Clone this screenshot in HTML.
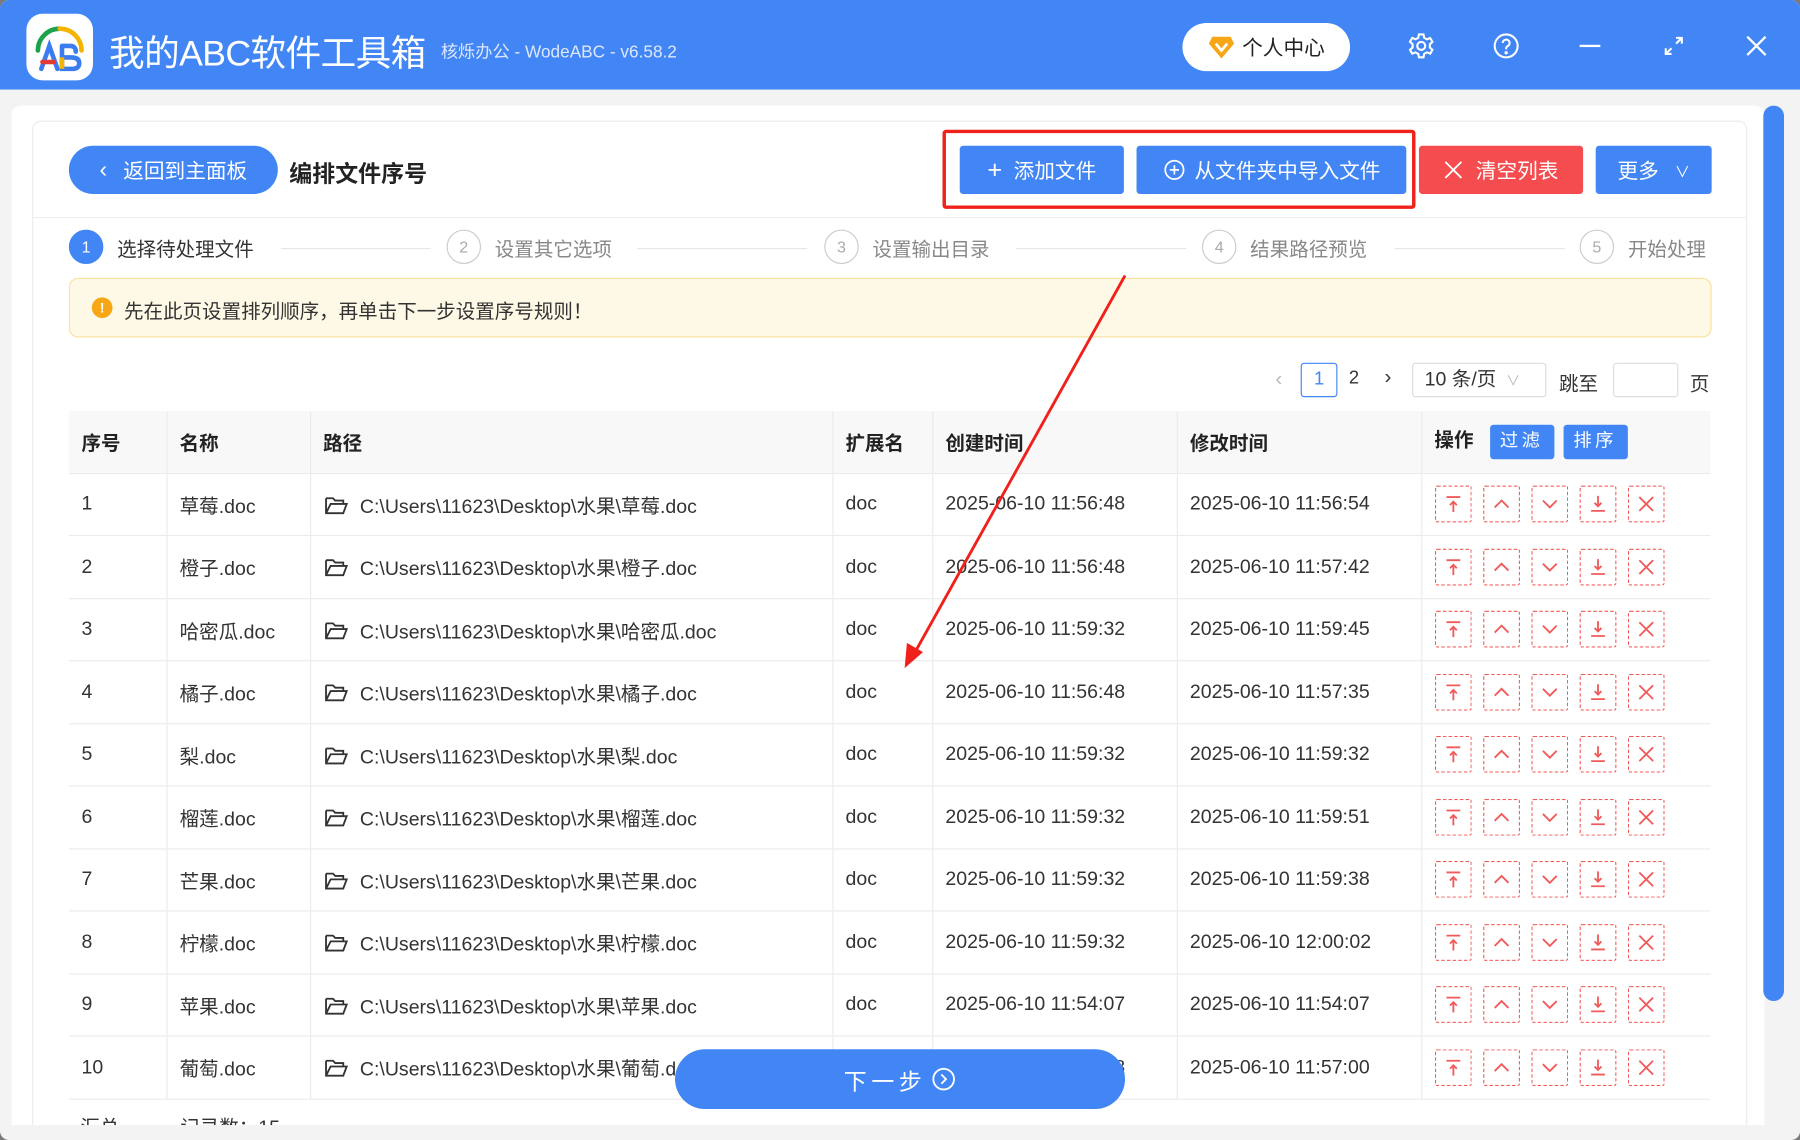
<!DOCTYPE html>
<html><head><meta charset="utf-8">
<style>
*{margin:0;padding:0;box-sizing:border-box}
html,body{width:1800px;height:1140px;overflow:hidden;background:#7a7a7a}
body{font-family:"Liberation Sans","Noto Sans CJK SC",sans-serif;color:#333}
#c{position:absolute;left:0;top:0;width:1568px;height:993px;transform:scale(1.148);transform-origin:0 0;background:#f3f3f3;border-radius:8px;overflow:hidden}
.a{position:absolute}
.top{left:0;top:0;width:1568px;height:78px;background:#4286f5}
.btn{position:absolute;height:42px;color:#fff;font-size:18px;display:flex;align-items:center;justify-content:center;border-radius:3px}
.step{position:absolute;top:200px;display:flex;align-items:center;font-size:17px;color:#888}
.circ{width:30px;height:30px;border-radius:50%;border:1px solid #ccc;display:flex;align-items:center;justify-content:center;font-size:14px;color:#aaa;margin-right:12px}
.line{position:absolute;top:216px;height:1px;background:#e6e6e6}
table{position:absolute;left:60px;top:358px;width:1430px;border-collapse:collapse;font-size:17px}
td,th{border-bottom:1px solid #ebebeb;border-right:1px solid #ebebeb;padding-left:11px;text-align:left;height:54.5px;color:#333;font-weight:normal;white-space:nowrap;vertical-align:middle}
th{background:#f8f8f8;font-weight:bold;height:54px;color:#222}
td:last-child,th:last-child{border-right:none}
.ops{display:flex;gap:10px}
.op{width:32px;height:32px;border:1px dashed #f25a5a;border-radius:2px;display:flex;align-items:center;justify-content:center}
.hb{display:inline-block;vertical-align:middle;background:#4286f5;color:#fff;font-size:16px;padding:0 9px;height:30px;line-height:30px;border-radius:3px;margin-left:8px;letter-spacing:3px;font-weight:normal}
</style></head><body>
<div id="c">
<div class="a top"></div>
<div class="a" style="left:23px;top:12px;width:58px;height:58px;background:#fff;border-radius:14px"></div>
<svg class="a" style="left:23px;top:12px" width="58" height="58" viewBox="0 0 58 58">
<path d="M10 32 A19 19 0 0 1 29 13" stroke="#1ca24a" stroke-width="4" fill="none" stroke-linecap="round"/>
<path d="M29 13 A19 19 0 0 1 48 32" stroke="#f5b400" stroke-width="4" fill="none" stroke-linecap="round"/>
<path d="M13 48 L20 28 L27 48" stroke="#3b7cf0" stroke-width="4" fill="none" stroke-linecap="round"/>
<path d="M14 42 L24 42" stroke="#e53935" stroke-width="4" stroke-linecap="round"/>
<path d="M31 28 L31 48 L40 48 Q46 48 46 43 Q46 38 39 38 L31 38 M31 28 L38 28 Q43 28 43 33" stroke="#3b7cf0" stroke-width="4" fill="none" stroke-linecap="round"/>
<path d="M31 38 L31 48" stroke="#f5b400" stroke-width="4"/>
</svg>
<div class="a" style="left:95px;top:21px;color:#fff;font-size:31px;letter-spacing:-0.5px">我的ABC软件工具箱</div>
<div class="a" style="left:384px;top:34px;color:#dce8fd;font-size:15px">核烁办公 - WodeABC - v6.58.2</div>
<div class="a" style="left:1030px;top:20px;width:146px;height:42px;background:#fff;border-radius:21px;font-size:18px;color:#222;display:flex;align-items:center;padding-left:22px">
<svg width="24" height="22" viewBox="0 0 24 22" style="margin-right:6px"><path d="M4 2 L20 2 L23 8 L12 21 L1 8 Z" fill="#f7a715"/><path d="M7 8 L12 14 L17 8" stroke="#fff" stroke-width="2.4" fill="none"/></svg>个人中心</div>
<svg class="a" style="left:1226px;top:28px" width="24" height="24" viewBox="0 0 24 24" fill="none" stroke="#fff" stroke-width="1.8"><circle cx="12" cy="12" r="3.5"/><path d="M10 2h4l.6 3 2.4 1.3 2.8-1.2 2 3.4-2.3 2v2.9l2.3 2-2 3.4-2.8-1.2-2.4 1.3-.6 3h-4l-.6-3-2.4-1.3-2.8 1.2-2-3.4 2.3-2V10.4l-2.3-2 2-3.4 2.8 1.2L9.4 5z"/></svg>
<svg class="a" style="left:1300px;top:28px" width="24" height="24" viewBox="0 0 24 24" fill="none" stroke="#fff" stroke-width="1.8"><circle cx="12" cy="12" r="10"/><path d="M9 9.5a3 3 0 1 1 4 2.8c-.8.4-1 1-1 2V15"/><circle cx="12" cy="18" r=".6" fill="#fff"/></svg>
<div class="a" style="left:1376px;top:39px;width:18px;height:2px;background:#fff"></div>
<svg class="a" style="left:1449px;top:31px" width="18" height="18" viewBox="0 0 18 18" stroke="#fff" stroke-width="1.8" fill="none"><path d="M11 2h5v5M16 2l-5 5M7 16H2v-5M2 16l5-5"/></svg>
<svg class="a" style="left:1521px;top:31px" width="18" height="18" viewBox="0 0 18 18" stroke="#fff" stroke-width="2"><path d="M1 1L17 17M17 1L1 17"/></svg>

<div class="a" style="left:10px;top:92px;width:1527px;height:901px;background:#fff;border-radius:8px"></div>
<div class="a" style="left:28px;top:105px;width:1494px;height:900px;border:1px solid #ececec;border-radius:8px"></div>
<div class="a" style="left:1536px;top:92px;width:18px;height:780px;background:#4286f5;border-radius:9px"></div>

<div class="btn" style="left:60px;top:127px;width:182px;border-radius:21px;background:#4286f5"><span style="margin-right:14px;font-size:20px">&lsaquo;</span>返回到主面板</div>
<div class="a" style="left:252px;top:135px;font-size:20px;font-weight:bold;color:#222">编排文件序号</div>
<div class="btn" style="left:836px;top:127px;width:143px;background:#4286f5"><span style="font-size:22px;margin-right:10px;font-weight:300">+</span>添加文件</div>
<div class="btn" style="left:990px;top:127px;width:235px;background:#4286f5"><svg width="20" height="20" viewBox="0 0 20 20" style="margin-right:8px" fill="none" stroke="#fff" stroke-width="1.5"><circle cx="10" cy="10" r="8"/><path d="M10 6v8M6 10h8"/></svg>从文件夹中导入文件</div>
<div class="btn" style="left:1236px;top:127px;width:143px;background:#f44c4f"><svg width="16" height="16" viewBox="0 0 16 16" stroke="#fff" stroke-width="1.6" style="margin-right:12px"><path d="M1 1l14 14M15 1L1 15"/></svg>清空列表</div>
<div class="btn" style="left:1390px;top:127px;width:101px;background:#4286f5">更多<span style="font-size:13px;margin-left:14px">&#x2228;</span></div>
<div class="a" style="left:821px;top:113px;width:412px;height:69px;border:3px solid #f0201a;border-radius:3px"></div>
<div class="a" style="left:28px;top:189px;width:1494px;height:1px;background:#eee"></div>

<div class="step" style="left:60px"><div class="circ" style="background:#4286f5;border-color:#4286f5;color:#fff">1</div><span style="color:#333">选择待处理文件</span></div>
<div class="line" style="left:245px;width:130px"></div>
<div class="step" style="left:389px"><div class="circ">2</div>设置其它选项</div>
<div class="line" style="left:555px;width:148px"></div>
<div class="step" style="left:718px"><div class="circ">3</div>设置输出目录</div>
<div class="line" style="left:885px;width:148px"></div>
<div class="step" style="left:1047px"><div class="circ">4</div>结果路径预览</div>
<div class="line" style="left:1215px;width:148px"></div>
<div class="step" style="left:1376px"><div class="circ">5</div>开始处理</div>

<div class="a" style="left:60px;top:242px;width:1431px;height:52px;background:#fef9e6;border:1px solid #f9e29a;border-radius:8px"></div>
<div class="a" style="left:80px;top:259px;width:18px;height:18px;border-radius:50%;background:#f7a715;color:#fff;font-size:12px;font-weight:bold;text-align:center;line-height:18px">!</div>
<div class="a" style="left:108px;top:257px;font-size:17px;color:#333">先在此页设置排列顺序，再单击下一步设置序号规则！</div>

<div class="a" style="left:1111px;top:320px;color:#bbb;font-size:18px">&lsaquo;</div>
<div class="a" style="left:1133px;top:316px;width:32px;height:30px;border:1px solid #4286f5;border-radius:3px;color:#4286f5;text-align:center;line-height:28px;font-size:16px">1</div>
<div class="a" style="left:1175px;top:321px;font-size:16px">2</div>
<div class="a" style="left:1206px;top:318px;font-size:18px">&rsaquo;</div>
<div class="a" style="left:1230px;top:316px;width:117px;height:30px;border:1px solid #ddd;border-radius:3px;font-size:17px;line-height:28px;padding-left:10px">10 条/页 <span style="color:#bbb;font-size:12px;margin-left:4px">&#x2228;</span></div>
<div class="a" style="left:1358px;top:320px;font-size:17px">跳至</div>
<div class="a" style="left:1405px;top:316px;width:57px;height:30px;border:1px solid #ddd;border-radius:3px"></div>
<div class="a" style="left:1472px;top:320px;font-size:17px">页</div>

<table>
<colgroup><col style="width:85px"><col style="width:125px"><col style="width:455px"><col style="width:87px"><col style="width:213px"><col style="width:213px"><col></colgroup>
<tr><th>序号</th><th>名称</th><th>路径</th><th>扩展名</th><th>创建时间</th><th>修改时间</th><th>操作<span class="hb" style="margin-left:14px">过滤</span><span class="hb">排序</span></th></tr>
<tbody id="tb"></tbody>
</table>

<div class="a" style="left:70px;top:968px;font-size:17px;color:#333">汇总</div>
<div class="a" style="left:157px;top:968px;font-size:17px;color:#333">记录数：15</div>

<div class="btn" style="left:588px;top:914px;width:392px;height:52px;border-radius:26px;background:#4286f5;font-size:20px;letter-spacing:4px">下一步<svg width="22" height="22" viewBox="0 0 22 22" fill="none" stroke="#fff" stroke-width="1.6" style="margin-left:4px"><circle cx="11" cy="11" r="9"/><path d="M9 7l4 4-4 4"/></svg></div>

<svg class="a" style="left:0;top:0" width="1568" height="993"><line x1="980" y1="240" x2="796" y2="570" stroke="#f0201a" stroke-width="2.5"/><path d="M788 582 L790 560 L804 568 Z" fill="#f0201a"/></svg>
<div class="a" style="left:0;top:980px;width:1568px;height:13px;background:#f3f3f3"></div>
</div>
<script>
var d=[["草莓","2025-06-10 11:56:48","2025-06-10 11:56:54"],["橙子","2025-06-10 11:56:48","2025-06-10 11:57:42"],["哈密瓜","2025-06-10 11:59:32","2025-06-10 11:59:45"],["橘子","2025-06-10 11:56:48","2025-06-10 11:57:35"],["梨","2025-06-10 11:59:32","2025-06-10 11:59:32"],["榴莲","2025-06-10 11:59:32","2025-06-10 11:59:51"],["芒果","2025-06-10 11:59:32","2025-06-10 11:59:38"],["柠檬","2025-06-10 11:59:32","2025-06-10 12:00:02"],["苹果","2025-06-10 11:54:07","2025-06-10 11:54:07"],["葡萄","2025-06-10 11:56:48","2025-06-10 11:57:00"]];
var s='<svg width="18" height="18" viewBox="0 0 18 18" fill="none" stroke="#f25a5a" stroke-width="1.6">';
var ic=[s+'<path d="M3 3h12M9 16V7M6 10l3-3 3 3"/></svg>',s+'<path d="M3 12l6-6 6 6"/></svg>',s+'<path d="M3 6l6 6 6-6"/></svg>',s+'<path d="M3 15h12M9 2v9M6 8l3 3 3-3"/></svg>',s+'<path d="M3 3l12 12M15 3L3 15"/></svg>'];
var ops='<div class="ops">'+ic.map(function(x){return '<div class="op">'+x+'</div>'}).join('')+'</div>';
var fo='<svg width="22" height="18" viewBox="0 0 22 18" fill="none" stroke="#333" stroke-width="1.6" style="vertical-align:-2px;margin-right:10px"><path d="M2 3h6l2 2h7v3M2 3v13h15l3-8H6L2 16"/></svg>';
var h='';d.forEach(function(r,i){h+='<tr><td>'+(i+1)+'</td><td>'+r[0]+'.doc</td><td>'+fo+'C:\\Users\\11623\\Desktop\\水果\\'+r[0]+'.doc</td><td>doc</td><td>'+r[1]+'</td><td>'+r[2]+'</td><td>'+ops+'</td></tr>'});
document.getElementById('tb').innerHTML=h;
</script>
</body></html>
